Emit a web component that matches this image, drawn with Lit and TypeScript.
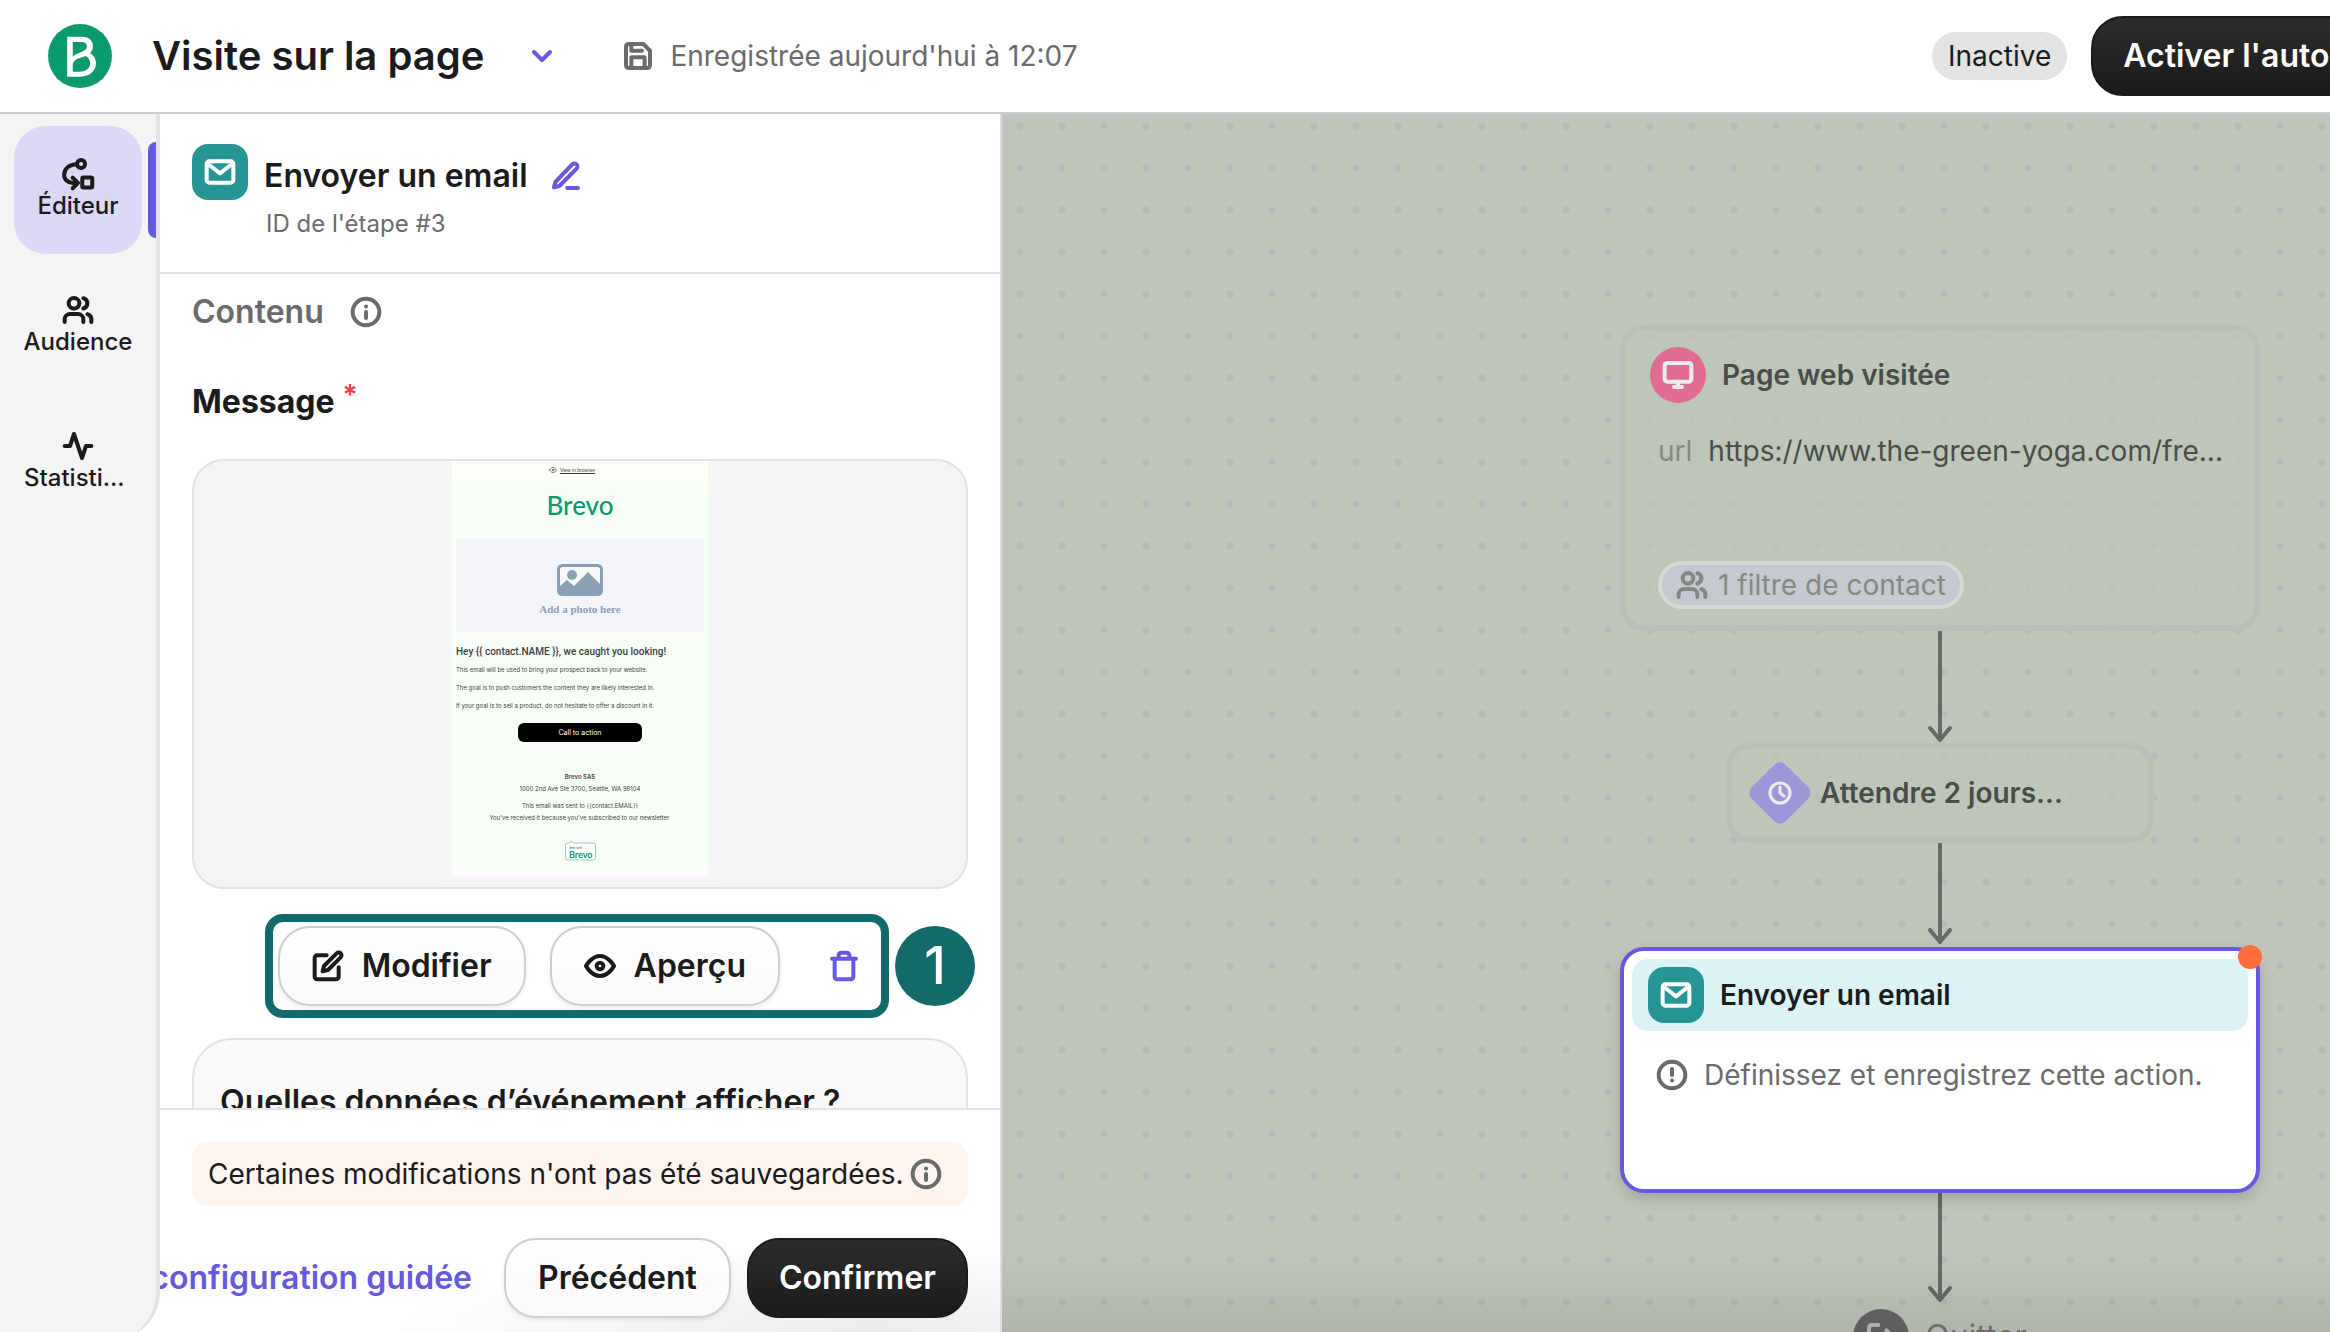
import { LitElement, html, css, svg, nothing, type TemplateResult } from "lit";
import { customElement, property } from "lit/decorators.js";

const glyphs: Record<string, TemplateResult> = {
  chevron: svg`<path d="M6 9l6 6 6-6" />`,
  save: svg`<path d="M19 21H5a2 2 0 0 1-2-2V5a2 2 0 0 1 2-2h11l5 5v11a2 2 0 0 1-2 2z" /><path d="M17 21v-8H7v8" /><path d="M7 3v5h8" />`,
  users: svg`<path d="M16 21v-2a4 4 0 0 0-4-4H6a4 4 0 0 0-4 4v2" /><circle cx="9" cy="7" r="4" /><path d="M22 21v-2a4 4 0 0 0-3-3.87" /><path d="M16 3.13a4 4 0 0 1 0 7.75" />`,
  activity: svg`<path d="M22 12h-4l-3 9L9 3l-3 9H2" />`,
  flow: svg`<circle cx="14.3" cy="4.5" r="3" /><path d="M11 4.6C5.500 4.600 1.600 8.200 1.600 12.500C1.600 16 4.400 18.700 8 18.700H11.500" /><path d="M8 14.800l4 3.900-4 4" /><rect x="15.200" y="14.700" width="7.500" height="7.500" rx="1" />`,
  mail: svg`<rect x="2" y="4" width="20" height="16" rx="2" /><path d="M3 6l9 7 9-7" />`,
  pen: svg`<path d="M13 21h8" /><path d="M16.500 3.500a2.120 2.120 0 0 1 3.500 3L7 19.500l-4 1 1-4z" />`,
  edit: svg`<path d="M11 4H4a2 2 0 0 0-2 2v14a2 2 0 0 0 2 2h14a2 2 0 0 0 2-2v-7" /><path d="M18.500 2.500a2.120 2.120 0 0 1 3 3L12 15l-4 1 1-4z" />`,
  eye: svg`<path d="M1.500 12S5.500 4.500 12 4.500 22.500 12 22.500 12 18.500 19.500 12 19.500 1.500 12 1.500 12z" /><circle cx="12" cy="12" r="2.500" />`,
  trash: svg`<path d="M3 6.500h18" /><path d="M19 6.500V20a2 2 0 0 1-2 2H7a2 2 0 0 1-2-2V6.500" /><path d="M8 6V4a2 2 0 0 1 2-2h4a2 2 0 0 1 2 2v2" />`,
  info: svg`<circle cx="12" cy="12" r="10" /><path d="M12 12v4.500" /><path d="M12 7.800h.01" />`,
  alert: svg`<circle cx="12" cy="12" r="10" /><path d="M12 7.500v4.500" /><path d="M12 16.200h.01" />`,
  monitor: svg`<rect x="2" y="3" width="20" height="14" rx="2" /><path d="M9 21h6" /><path d="M12 17v4" />`,
  clock: svg`<circle cx="12" cy="12" r="10" /><path d="M12 6v6l4 3" />`,
  exit: svg`<path d="M10 21H5a2 2 0 0 1-2-2V5a2 2 0 0 1 2-2h5" /><path d="M16 17l5-5-5-5" /><path d="M21 12H9" />`,
};

const icon = (name: string, size = "") =>
  html`<svg class="icon ${size}" viewBox="0 0 24 24" aria-hidden="true">${glyphs[name]}</svg>`;

const shared = css`
  * { box-sizing: border-box; }
  h1, h2, h3, p { margin: 0; font-weight: 600; }
  button { font: inherit; color: inherit; border: 0; background: none; padding: 0; cursor: pointer; }
  a { color: inherit; text-decoration: none; }
  .icon {
    display: block; flex: none; width: 32px; height: 32px; overflow: visible;
    fill: none; stroke: currentColor; stroke-width: 3; stroke-linecap: round; stroke-linejoin: round;
  }
  .icon.small { width: 24px; height: 24px; }
  .badge {
    display: grid; place-items: center; flex: none; width: 56px; height: 56px;
    border-radius: 16px; background: #279595; color: #fff;
  }
  .btn {
    display: inline-flex; align-items: center; justify-content: center; gap: 18px; flex: none;
    height: 80px; padding: 0 32px; border-radius: 32px; border: 2px solid #cfcfcf;
    font-size: 32px; font-weight: 600; line-height: 40px; white-space: nowrap; color: #1b1b1b;
    background: linear-gradient(#fff, #fafafa); box-shadow: 0 2px 4px rgba(0, 0, 0, 0.08);
  }
  .btn.dark { padding: 0 30px; color: #fff; border-color: #1b1b1b; background: linear-gradient(#2c2c2c, #1b1b1b); box-shadow: none; }
`;

@customElement("email-preview")
class EmailPreview extends LitElement {
  static styles = [shared, css`
    :host { display: flex; justify-content: center; height: 430px; border: 2px solid #e3e3e3; border-radius: 32px; background: #f4f4f4; overflow: hidden; }
    .tray { padding: 0 10px 12px; background: #f6f6f6; }
    .mail { width: 256px; height: 414px; background: #f8fff7; color: #3b3f44; font-size: 6px; line-height: 12px; text-align: center; }
    .view { display: flex; align-items: center; justify-content: center; gap: 3px; height: 22px; padding: 0 16px 4px 0; background: #fffdf8; font: 5px/6px "Liberation Sans", sans-serif; }
    .view .icon { width: 8px; height: 8px; stroke-width: 2; }
    .view a { text-decoration: underline; }
    .brand { height: 56px; padding-top: 6px; font: 500 26px/32px Lato, sans-serif; color: #0b996e; }
    .photo { display: flex; flex-direction: column; align-items: center; height: 93px; margin: 0 4px; padding-top: 25px; gap: 5px; background: #f4f5fb; color: #8aa0b5; font: 700 11px/16px "Liberation Serif", serif; }
    .photo svg { width: 46px; height: 32px; }
    .copy { padding: 13px 4px 0; text-align: left; }
    .copy h3 { font: 500 10px/14px Roboto, sans-serif; margin-bottom: 5px; }
    .copy p { font-weight: 400; line-height: 12px; margin-bottom: 6px; }
    .cta { display: block; width: 124px; height: 19px; margin: 11px auto 29px; border-radius: 6px; background: #000; color: #fff; font-size: 7px; line-height: 19px; }
    .foot p { font-weight: 400; line-height: 12px; }
    .foot .name { font-weight: 600; }
    .foot .gap { margin-bottom: 5px; }
    .sent { display: block; width: 31px; margin: 16px auto 0; }
    .sent svg { display: block; width: 31px; height: 22px; overflow: visible; }
  `];

  render() {
    return html`
      <div class="tray">
        <div class="mail">
          <div class="view">${icon("eye")}<a href="#">View in browser</a></div>
          <div class="brand">Brevo</div>
          <div class="photo">
            <svg viewBox="0 0 46 32" aria-hidden="true">
              <rect x="1.500" y="1.500" width="43" height="29" rx="4" fill="#f8f9fd" stroke="#8aa0b5" stroke-width="3" />
              <circle cx="15" cy="11" r="5" fill="#8aa0b5" />
              <path d="M3 22l7-6 7 6 14-14 12 12v10H3z" fill="#8aa0b5" />
            </svg>
            <span>Add a photo here</span>
          </div>
          <div class="copy">
            <h3>Hey {{ contact.NAME }}, we caught you looking!</h3>
            <p>This email will be used to bring your prospect back to your website.</p>
            <p>The goal is to push customers the content they are likely interested in.</p>
            <p>If your goal is to sell a product, do not hesitate to offer a discount in it.</p>
          </div>
          <a class="cta" href="#">Call to action</a>
          <div class="foot">
            <p class="name">Brevo SAS</p>
            <p class="gap">1000 2nd Ave Ste 3700, Seattle, WA 98104</p>
            <p>This email was sent to {{contact.EMAIL}}</p>
            <p>You've received it because you've subscribed to our newsletter.</p>
          </div>
          <a class="sent" href="#">
            <svg viewBox="0 0 31 22">
              <path d="M3 3h2l1.500-2.500L8 3h20a2.500 2.500 0 0 1 2.500 2.500v12a2.500 2.500 0 0 1-2.500 2.500H3a2.500 2.500 0 0 1-2.500-2.500v-12A2.500 2.500 0 0 1 3 3z" fill="#fff" stroke="#8fd3bb" />
              <text x="4" y="9" font-size="3" fill="#3b3f44">Sent with</text>
              <text x="4" y="18" font-family="Lato, sans-serif" font-weight="700" font-size="9" fill="#0b996e">Brevo</text>
            </svg>
          </a>
        </div>
      </div>`;
  }
}

@customElement("step-panel")
class StepPanel extends LitElement {
  static styles = [shared, css`
    :host { display: flex; flex-direction: column; background: #fff; border-right: 2px solid #dcdcdc; overflow: hidden; min-height: 0; }
    .head { display: flex; gap: 16px; height: 160px; padding: 30px 32px 0; border-bottom: 2px solid #e3e3e3; flex: none; }
    .head .names { padding-top: 12px; }
    .head .line { display: flex; align-items: center; gap: 22px; }
    h2 { font-size: 32px; line-height: 40px; }
    .edit { color: #6659de; }
    .id { padding: 12px 0 0 2px; font-size: 24px; font-weight: 400; line-height: 32px; color: #6b6b6b; }
    .body { flex: 1; min-height: 0; overflow: hidden; padding: 18px 32px 0; }
    .section { display: flex; align-items: center; gap: 26px; color: #6b6b6b; }
    .message { display: flex; gap: 8px; margin: 50px 0 37px; font-size: 32px; line-height: 40px; font-weight: 700; }
    .star { font-size: 28px; line-height: 26px; font-weight: 600; color: #ff3b4e; }
    .tools { display: flex; align-items: center; justify-content: flex-end; gap: 6px; margin: 25px -7px 20px 0; }
    .frame { display: flex; align-items: center; border: 8px solid #126b6a; border-radius: 18px; padding: 4px 21px 4px 5px; }
    .frame .btn + .btn { margin: 0 48px 0 24px; }
    .trash { color: #6659de; }
    .step { display: grid; place-items: center; width: 80px; height: 80px; border-radius: 50%; background: #126b6a; color: #fff; font-size: 52px; font-weight: 500; line-height: 80px; }
    .event { border: 2px solid #e3e3e3; border-radius: 40px; background: #fafafa; padding: 42px 26px; height: 240px; }
    .foot { flex: none; border-top: 2px solid #e3e3e3; padding: 32px 32px 14px; background: radial-gradient(ellipse 480px 90px at 85% 100%, #ebebeb, #fff); }
    .note { display: flex; align-items: center; gap: 6px; height: 64px; padding: 0 16px; border-radius: 16px; background: #fff5f0; font-size: 28px; line-height: 40px; white-space: nowrap; }
    .note .icon { color: #6b6b6b; }
    .actions { display: flex; justify-content: flex-end; align-items: center; gap: 16px; margin-top: 32px; }
    .guide { color: #6659de; font-size: 32px; font-weight: 600; line-height: 40px; white-space: nowrap; margin-right: 16px; }
    .info { color: #6b6b6b; }
  `];

  render() {
    return html`
      <header class="head">
        <span class="badge">${icon("mail")}</span>
        <div class="names">
          <div class="line">
            <h2>Envoyer un email</h2>
            <button class="edit" aria-label="Renommer">${icon("pen")}</button>
          </div>
          <p class="id">ID de l'étape #3</p>
        </div>
      </header>
      <div class="body">
        <div class="section"><h2>Contenu</h2><button class="info" aria-label="Informations">${icon("info")}</button></div>
        <h3 class="message">Message<span class="star">*</span></h3>
        <email-preview></email-preview>
        <div class="tools">
          <div class="frame">
            <button class="btn">${icon("edit")}Modifier</button>
            <button class="btn">${icon("eye")}Aperçu</button>
            <button class="trash" aria-label="Supprimer">${icon("trash")}</button>
          </div>
          <span class="step">1</span>
        </div>
        <section class="event"><h2>Quelles données d’événement afficher ?</h2></section>
      </div>
      <footer class="foot">
        <div class="note">Certaines modifications n'ont pas été sauvegardées.${icon("info")}</div>
        <div class="actions">
          <a class="guide" href="#">configuration guidée</a>
          <button class="btn">Précédent</button>
          <button class="btn dark">Confirmer</button>
        </div>
      </footer>`;
  }
}

@customElement("flow-arrow")
class FlowArrow extends LitElement {
  @property({ type: Number }) length = 100;
  static styles = css`
    :host { display: block; color: #696969; }
    svg { display: block; overflow: visible; fill: none; stroke: currentColor; stroke-width: 4; stroke-linecap: round; stroke-linejoin: round; }
  `;
  render() {
    const l = this.length;
    return html`<svg width="24" height=${l} viewBox="0 0 24 ${l}" aria-hidden="true">
      <path d="M12 0V${l - 4}" stroke-linecap="butt" /><path d="M2 ${l - 15}L12 ${l - 3}L22 ${l - 15}" />
    </svg>`;
  }
}

@customElement("flow-canvas")
class FlowCanvas extends LitElement {
  static styles = [shared, css`
    :host {
      display: block; position: relative; overflow: hidden; min-height: 0; font-size: 28px; line-height: 40px;
      background: radial-gradient(circle, #b4bbb5 0, #b4bbb5 3px, transparent 4px) -3px -9px / 42px 42px #bec5ba;
    }
    :host::after {
      content: ""; position: absolute; inset: auto 0 0; height: 80px; pointer-events: none;
      background: linear-gradient(transparent, rgba(0, 0, 0, 0.08));
    }
    .flow { position: absolute; left: 618px; top: 211px; width: 640px; display: flex; flex-direction: column; align-items: center; }
    h3 { font-size: 28px; line-height: 40px; white-space: nowrap; }
    .node { position: relative; border-radius: 24px; }
    .muted { border: 6px solid #b8bfb7; background: rgba(190, 197, 186, 0.75); color: #4a4d49; }
    .trigger { width: 640px; height: 306px; padding: 16px 24px; }
    .row { display: flex; align-items: center; gap: 16px; }
    .round { border-radius: 50%; background: #e06c91; color: #ececec; }
    .url { padding: 28px 8px 0; white-space: nowrap; }
    .key { color: #868a84; }
    .filter { display: inline-flex; align-items: center; gap: 10px; height: 48px; margin: 90px 0 0 8px; padding: 0 14px; border: 4px solid #d5dbd4; border-radius: 24px; background: #c6c9d0; color: #848983; white-space: nowrap; }
    .wait { width: 428px; height: 100px; padding: 0 24px; display: flex; align-items: center; gap: 16px; }
    .diamond { display: grid; place-items: center; width: 48px; height: 48px; border-radius: 8px; background: #9d97d9; color: #ececec; transform: rotate(45deg); }
    .diamond .icon { transform: rotate(-45deg); }
    .active { width: 640px; height: 246px; margin-top: 2px; padding: 8px; border: 4px solid #6659de; background: #fff; color: #1b1b1b; box-shadow: 0 6px 16px rgba(0, 0, 0, 0.15); }
    .title { height: 72px; padding: 0 16px; border-radius: 16px; background: #dbf3f5; }
    .hint { padding: 24px 24px 0; color: #6b6b6b; white-space: nowrap; }
    .dot { position: absolute; top: -6px; right: -6px; width: 24px; height: 24px; border-radius: 50%; background: #ff6f3b; }
    .exit { margin-top: 6px; color: #747772; font-size: 32px; }
    .exit .badge { border-radius: 50%; background: #666; color: #b8bdb6; }
  `];

  render() {
    return html`
      <div class="flow">
        <article class="node muted trigger">
          <div class="row"><span class="badge round">${icon("monitor")}</span><h3>Page web visitée</h3></div>
          <div class="row url"><span class="key">url</span><span>https://www.the-green-yoga.com/fre...</span></div>
          <span class="filter">${icon("users")}1 filtre de contact</span>
        </article>
        <flow-arrow .length=${112}></flow-arrow>
        <article class="node muted wait">
          <span class="diamond">${icon("clock", "small")}</span><h3>Attendre 2 jours...</h3>
        </article>
        <flow-arrow .length=${102}></flow-arrow>
        <article class="node active">
          <div class="row title"><span class="badge">${icon("mail")}</span><h3>Envoyer un email</h3></div>
          <div class="row hint">${icon("alert")}<span>Définissez et enregistrez cette action.</span></div>
          <span class="dot"></span>
        </article>
        <flow-arrow .length=${110}></flow-arrow>
        <div class="row exit"><span class="badge">${icon("exit")}</span><span>Quitter</span></div>
      </div>`;
  }
}

@customElement("app-root")
class AppRoot extends LitElement {
  static styles = [shared, css`
    :host {
      display: grid; grid-template: 114px minmax(0, 1fr) / 160px 842px minmax(0, 1fr);
      height: 100vh; overflow: hidden; background: #fff; color: #1b1b1b;
      font-family: Inter, "Liberation Sans", sans-serif; font-size: 28px;
    }
    .top { grid-column: 1 / -1; display: flex; align-items: center; min-width: 0; padding-left: 48px; border-bottom: 2px solid #cccccc; overflow: hidden; }
    .logo { width: 64px; height: 64px; flex: none; margin-right: 40px; }
    h1 { font-size: 40px; line-height: 48px; white-space: nowrap; }
    .menu { color: #6659de; margin: 0 64px 0 42px; }
    .saved { display: flex; align-items: center; gap: 16px; color: #6b6b6b; line-height: 40px; white-space: nowrap; }
    .right { display: flex; align-items: center; gap: 24px; flex: 0 0 398px; min-width: 0; margin-left: auto; }
    .chip { flex: none; padding: 4px 16px; border-radius: 24px; background: #e3e3e3; line-height: 40px; }
    .side { display: flex; flex-direction: column; gap: 8px; height: calc(100% + 8px); padding: 12px 0 0 14px; background: #f4f4f4; border-right: 4px solid #e3e3e3; border-bottom-right-radius: 48px; }
    .item { position: relative; display: flex; flex-direction: column; align-items: center; justify-content: center; gap: 2px; width: 128px; height: 128px; padding-bottom: 2px; border-radius: 32px; font-size: 24px; font-weight: 500; line-height: 28px; white-space: nowrap; }
    .item.on { background: #dcd8f8; }
    .item.on::after { content: ""; position: absolute; left: 134px; top: 16px; width: 8px; height: 96px; border-radius: 8px 0 0 8px; background: #6659de; }
    .label.cut { width: 108px; }
  `];

  private items = [
    { icon: "flow", label: "Éditeur", on: true, cut: false },
    { icon: "users", label: "Audience", on: false, cut: false },
    { icon: "activity", label: "Statisti...", on: false, cut: true },
  ];

  render() {
    return html`
      <header class="top">
        <svg class="logo" viewBox="0 0 24 24" role="img" aria-label="Brevo">
          <circle cx="12" cy="12" r="12" fill="#0b996e" />
          <path fill="#fff" fill-rule="evenodd" d="M7.200 4.800h5.747c2.340 0 3.895 1.406 3.895 3.516 0 1.022-.348 1.862-1.090 2.588C17.189 11.812 18 13.220 18 14.785c0 2.860-2.640 5.016-6.164 5.016H7.199zM9.285 6.752v5.537h.07c.233-.432.858-.996 2.249-1.450 2.039-.659 2.988-1.310 2.988-2.470 0-1 -.73-1.617-1.880-1.617zM14.150 12.018c-.766.260-1.563.500-2.050.680-1.740.569-2.815 1.480-2.815 2.750v2.450h2.527c2.250 0 4-1.290 4-3.090 0-1.200-.66-2.230-1.662-2.790z" />
        </svg>
        <h1>Visite sur la page</h1>
        <button class="menu" aria-label="Menu">${icon("chevron")}</button>
        <span class="saved">${icon("save")}Enregistrée aujourd'hui à 12:07</span>
        <div class="right">
          <span class="chip">Inactive</span>
          <button class="btn dark">Activer l'automatisation</button>
        </div>
      </header>
      <nav class="side">
        ${this.items.map((i) => html`
          <a class="item ${i.on ? "on" : ""}" href="#" aria-current=${i.on ? "page" : nothing}>
            ${icon(i.icon)}<span class="label ${i.cut ? "cut" : ""}">${i.label}</span>
          </a>`)}
      </nav>
      <step-panel></step-panel>
      <flow-canvas></flow-canvas>`;
  }
}
